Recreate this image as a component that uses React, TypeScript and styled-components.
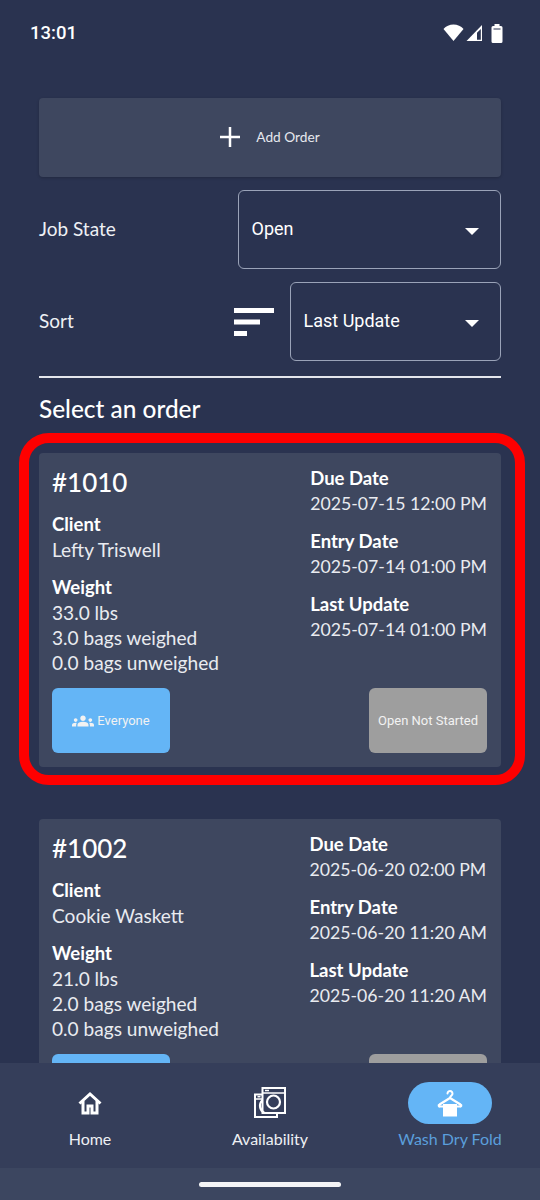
import React from 'react';
import styled, { createGlobalStyle } from 'styled-components';
import { MdGroups } from 'react-icons/md';

const GlobalStyle = createGlobalStyle`
  html, body {
    margin: 0;
    padding: 0;
    background: #2a3350;
  }
`;

const Page = styled.div`
  display: flex;
  flex-direction: column;
  width: 540px;
  height: 1200px;
  overflow: hidden;
  background: #2a3350;
  color: #fff;
  font-family: "Lato", "Open Sans", sans-serif;
`;

const StatusBar = styled.div`
  display: flex;
  flex: none;
  align-items: center;
  justify-content: space-between;
  height: 66px;
  padding: 0 37px 0 30px;
  box-sizing: border-box;
`;

const Time = styled.span`
  font-family: "Roboto", sans-serif;
  font-size: 18.500px;
  font-weight: 500;
`;

const StatusIcons = styled.div`
  display: flex;
  align-items: center;
`;

const Content = styled.main`
  flex: 1;
  min-height: 0;
  overflow: hidden;
  padding: 32px 39px 0;
`;

const AddButton = styled.div`
  display: flex;
  align-items: center;
  justify-content: center;
  gap: 16px;
  height: 79px;
  padding-bottom: 2px;
  box-sizing: border-box;
  border-radius: 4px;
  background: #3e475f;
  box-shadow: 0 1px 3px rgba(0, 0, 0, 0.2);
  font-size: 13.700px;
  color: #e6e8ee;
`;

const FilterRow = styled.div`
  display: flex;
  align-items: center;
  justify-content: space-between;
  margin-top: 13px;
`;

const FilterLabel = styled.span`
  margin-bottom: 2px;
  font-size: 19px;
  color: #eef0f4;
`;

const SortControls = styled.div`
  display: flex;
  align-items: center;
  gap: 16px;
`;

const Select = styled.div<{ $width: number }>`
  display: flex;
  align-items: center;
  justify-content: space-between;
  width: ${p => p.$width}px;
  height: 79px;
  box-sizing: border-box;
  padding: 0 21px 2px 12.500px;
  border: 1px solid #9aa3b8;
  border-radius: 6px;
  font-family: "Roboto", sans-serif;
  font-size: 18px;
`;

const Caret = styled.span`
  width: 0;
  height: 0;
  margin-top: 6px;
  border-left: 7px solid transparent;
  border-right: 7px solid transparent;
  border-top: 7px solid #fff;
`;

const Divider = styled.hr`
  height: 2px;
  margin: 15px 0 0;
  border: 0;
  background: #e4e6ec;
`;

const SectionTitle = styled.h2`
  margin: 16px 0 29px;
  font-size: 24.400px;
  line-height: 30px;
  font-weight: 500;
`;

const Card = styled.article<{ $selected?: boolean }>`
  position: relative;
  box-sizing: border-box;
  height: 314px;
  margin-bottom: 52px;
  padding: 13px 14px 14px 13px;
  display: flex;
  flex-direction: column;
  border-radius: 4px;
  background: #3e475f;
  ${p => p.$selected && `
    &::after {
      content: "";
      position: absolute;
      inset: -20px -24px -18px -20px;
      border: 10px solid #fe0000;
      border-radius: 30px;
    }
  `}
`;

const CardBody = styled.div`
  display: flex;
  flex: 1;
  justify-content: space-between;
`;

const CardColumn = styled.div`
  display: flex;
  flex-direction: column;
`;

const OrderNumber = styled.h3`
  margin: 0 0 14px;
  font-size: 26px;
  line-height: 32px;
  font-weight: 500;
`;

const Field = styled.div<{ $size: number }>`
  margin-bottom: 13px;
  font-size: ${p => p.$size}px;
  line-height: 25px;
  color: #e9ebf0;
`;

const FieldTitle = styled.div`
  font-size: 18.500px;
  font-weight: 700;
  color: #fff;
`;

const CardActions = styled.div`
  display: flex;
  justify-content: space-between;
`;

const Chip = styled.div<{ $tone: 'blue' | 'grey' }>`
  display: flex;
  align-items: center;
  justify-content: center;
  gap: 3px;
  width: 118px;
  height: 65px;
  border-radius: 6px;
  background: ${p => (p.$tone === 'blue' ? '#64b5f6' : '#9e9e9e')};
  font-family: "Roboto", sans-serif;
  font-size: 13px;
  color: #f2f2f2;
`;

const BottomNav = styled.nav`
  display: grid;
  flex: none;
  grid-template-columns: repeat(3, 1fr);
  height: 105px;
  background: #353e5a;
`;

const NavItem = styled.div`
  display: flex;
  flex-direction: column;
  align-items: center;
  padding-top: 19px;
`;

const NavIcon = styled.div<{ $active?: boolean }>`
  display: flex;
  align-items: center;
  justify-content: center;
  width: 84px;
  height: 42px;
  border-radius: 21px;
  background: ${p => (p.$active ? '#64b5f6' : 'transparent')};
`;

const NavLabel = styled.span<{ $active?: boolean }>`
  margin-top: 3px;
  font-size: 16px;
  line-height: 24px;
  color: ${p => (p.$active ? '#5b9fdc' : '#eef0f4')};
`;

const GestureArea = styled.div`
  display: flex;
  flex: none;
  align-items: flex-start;
  justify-content: center;
  height: 32px;
  padding-top: 14px;
  box-sizing: border-box;
  background: #3c4660;
`;

const GestureBar = styled.div`
  width: 142px;
  height: 5px;
  border-radius: 3px;
  background: #f4f4f6;
`;

const WifiIcon = () => (
  <svg width="21" height="20" viewBox="0 0 21 20">
    <path d="M0.500 6C3 3.200 6.500 1.500 10.500 1.500S18 3.200 20.500 6L10.500 18z" fill="#fff" />
  </svg>
);

const SignalIcon = () => (
  <svg width="25" height="20" viewBox="0 0 25 20" style={{ marginLeft: 2 }}>
    <path d="M16 2V18H0.500z" fill="#fff" />
    <path d="M14.800 6V16.800H11V9.800z" fill="#2a3350" />
  </svg>
);

const BatteryIcon = () => (
  <svg width="12" height="21" viewBox="0 0 12 21">
    <path d="M3.500 1h5v2h1.500a1.500 1.500 0 0 1 1.500 1.500v14a1.500 1.500 0 0 1-1.500 1.500H2A1.500 1.500 0 0 1 .5 18.500v-14A1.500 1.500 0 0 1 2 3h1.500z" fill="#fff" />
    <rect x="2.500" y="5.500" width="7" height="1" fill="#2a3350" />
  </svg>
);

const PlusIcon = () => (
  <svg width="20" height="20" viewBox="0 0 20 20">
    <path d="M10 0v20M0 10h20" stroke="#fff" strokeWidth="2.500" />
  </svg>
);

const SortIcon = () => (
  <svg width="40" height="28" viewBox="0 0 40 28">
    <path d="M0 0h40v5H0zM0 11.500h26v5H0zM0 23h13v5H0z" fill="#fff" />
  </svg>
);

const HomeIcon = () => (
  <svg width="24" height="24" viewBox="0 0 24 24" fill="none" stroke="#fff" strokeWidth="3" strokeLinejoin="miter">
    <path d="M1.500 12.500L12 3l10.500 9.500" />
    <path d="M5 10v12h5v-7h4v7h5V10" />
  </svg>
);

const WasherIcon = () => (
  <svg width="32" height="32" viewBox="0 0 32 32" fill="none" stroke="#fff" strokeWidth="2">
    <path d="M8.500 1h22.500v25H8.500z" />
    <path d="M8.500 6h22.500" strokeWidth="1.500" />
    <path d="M11 3.500h4" strokeWidth="1.500" />
    <circle cx="19.500" cy="15" r="6.500" strokeWidth="2.200" />
    <path d="M8.500 7.500H1v22.500h22v-4" />
    <path d="M1 12h7.500" strokeWidth="1.500" />
    <path d="M3.500 9.700h3" strokeWidth="1.500" />
    <path d="M8.500 13a8 8 0 0 0 2 13" strokeWidth="2.200" />
  </svg>
);

const HangerIcon = () => (
  <svg width="26" height="28" viewBox="0 0 26 28">
    <path d="M10.500 4.500a2.500 2.500 0 1 1 4 2c-1 .7-1.500 1-1.500 2.500" fill="none" stroke="#fff" strokeWidth="2" strokeLinecap="round" />
    <path d="M13 9L23.500 15.500a1 1 0 0 1-.5 2H3a1 1 0 0 1-.5-2z" fill="none" stroke="#fff" strokeWidth="2.200" strokeLinejoin="round" />
    <path d="M6 15h14v12.500H6z" fill="#fff" />
  </svg>
);

type Order = {
  number: string;
  client: string;
  lbs: string;
  weighed: string;
  unweighed: string;
  due: string;
  entry: string;
  updated: string;
  selected?: boolean;
};

const orders: Order[] = [
  {
    number: '#1010',
    client: 'Lefty Triswell',
    lbs: '33.0 lbs',
    weighed: '3.0 bags weighed',
    unweighed: '0.0 bags unweighed',
    due: '2025-07-15 12:00 PM',
    entry: '2025-07-14 01:00 PM',
    updated: '2025-07-14 01:00 PM',
    selected: true,
  },
  {
    number: '#1002',
    client: 'Cookie Waskett',
    lbs: '21.0 lbs',
    weighed: '2.0 bags weighed',
    unweighed: '0.0 bags unweighed',
    due: '2025-06-20 02:00 PM',
    entry: '2025-06-20 11:20 AM',
    updated: '2025-06-20 11:20 AM',
  },
];

const OrderCard = ({ order }: { order: Order }) => (
  <Card $selected={order.selected}>
    <CardBody>
      <CardColumn>
        <OrderNumber>{order.number}</OrderNumber>
        <Field $size={19.1}>
          <FieldTitle>Client</FieldTitle>
          {order.client}
        </Field>
        <Field $size={19.1}>
          <FieldTitle>Weight</FieldTitle>
          <div>{order.lbs}</div>
          <div>{order.weighed}</div>
          <div>{order.unweighed}</div>
        </Field>
      </CardColumn>
      <CardColumn>
        <Field $size={17.7}>
          <FieldTitle>Due Date</FieldTitle>
          {order.due}
        </Field>
        <Field $size={17.7}>
          <FieldTitle>Entry Date</FieldTitle>
          {order.entry}
        </Field>
        <Field $size={17.7}>
          <FieldTitle>Last Update</FieldTitle>
          {order.updated}
        </Field>
      </CardColumn>
    </CardBody>
    <CardActions>
      <Chip $tone="blue">
        <MdGroups size={22} />
        Everyone
      </Chip>
      <Chip $tone="grey">Open Not Started</Chip>
    </CardActions>
  </Card>
);

export default function App() {
  return (
    <Page>
      <GlobalStyle />
      <StatusBar>
        <Time>13:01</Time>
        <StatusIcons>
          <WifiIcon />
          <SignalIcon />
          <BatteryIcon />
        </StatusIcons>
      </StatusBar>
      <Content>
        <AddButton>
          <PlusIcon />
          Add Order
        </AddButton>
        <FilterRow>
          <FilterLabel>Job State</FilterLabel>
          <Select $width={263}>
            Open
            <Caret />
          </Select>
        </FilterRow>
        <FilterRow>
          <FilterLabel>Sort</FilterLabel>
          <SortControls>
            <SortIcon />
            <Select $width={211}>
              Last Update
              <Caret />
            </Select>
          </SortControls>
        </FilterRow>
        <Divider />
        <SectionTitle>Select an order</SectionTitle>
        {orders.map(order => (
          <OrderCard key={order.number} order={order} />
        ))}
      </Content>
      <BottomNav>
        <NavItem>
          <NavIcon>
            <HomeIcon />
          </NavIcon>
          <NavLabel>Home</NavLabel>
        </NavItem>
        <NavItem>
          <NavIcon>
            <WasherIcon />
          </NavIcon>
          <NavLabel>Availability</NavLabel>
        </NavItem>
        <NavItem>
          <NavIcon $active>
            <HangerIcon />
          </NavIcon>
          <NavLabel $active>Wash Dry Fold</NavLabel>
        </NavItem>
      </BottomNav>
      <GestureArea>
        <GestureBar />
      </GestureArea>
    </Page>
  );
}
